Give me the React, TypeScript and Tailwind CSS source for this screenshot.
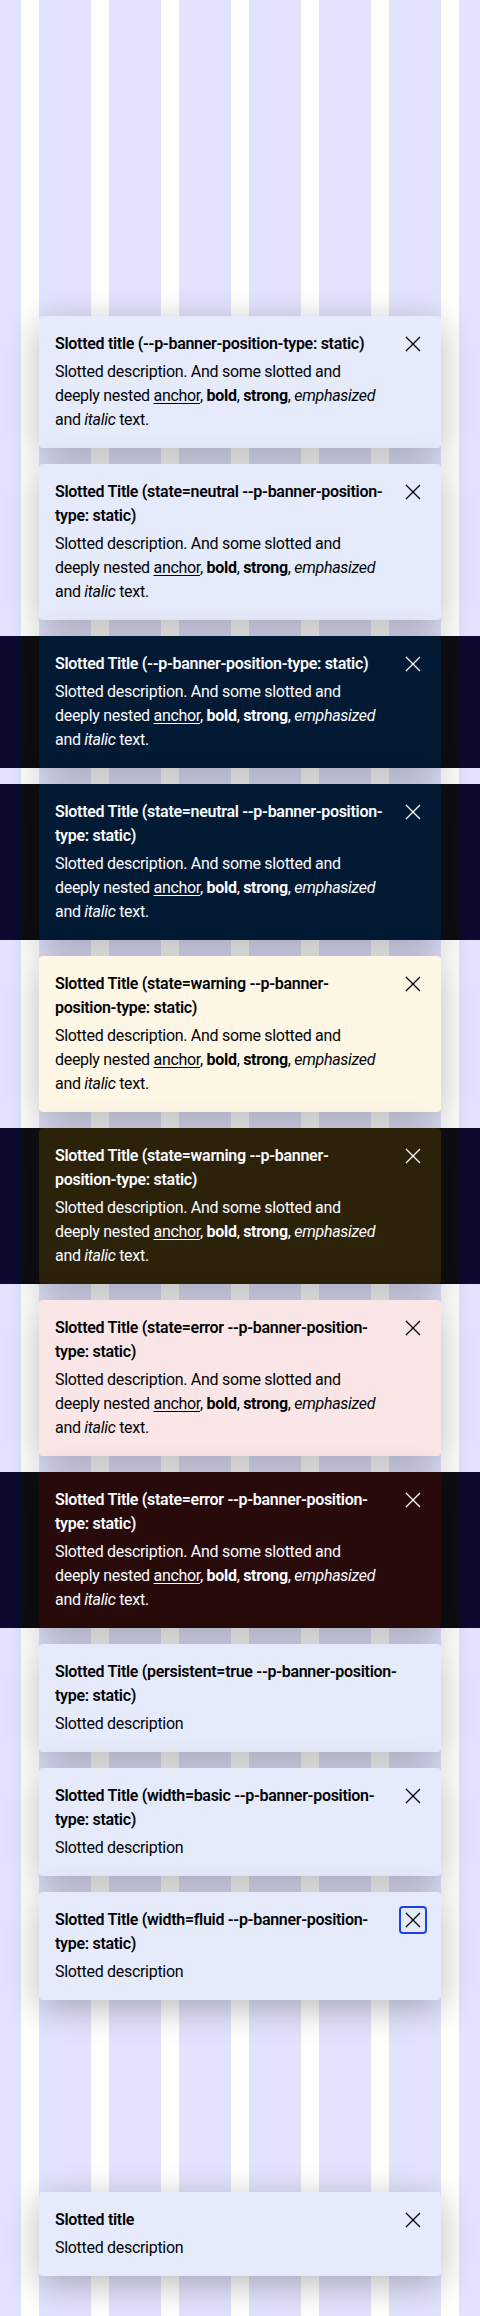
import React from 'react';

type Tone = 'info' | 'warning' | 'error';

const lightBg: Record<Tone, string> = {
  info: 'bg-[#e6ebfc]',
  warning: 'bg-[#fef7e5]',
  error: 'bg-[#fbe6e7]',
};

const darkBg: Record<Tone, string> = {
  info: 'bg-[#021a33]',
  warning: 'bg-[#2c220a]',
  error: 'bg-[#280a0b]',
};

function CloseIcon() {
  return (
    <svg width="24" height="24" viewBox="0 0 24 24" fill="none">
      <path d="M5 5L19 19M19 5L5 19" stroke="currentColor" strokeWidth="1.3" />
    </svg>
  );
}

function RichDescription() {
  return (
    <>
      Slotted description. And some slotted and
      <br />
      deeply nested <a className="underline underline-offset-2">anchor</a>, <b className="font-bold">bold</b>,{' '}
      <strong className="font-bold">strong</strong>, <em className="italic">emphasized</em>
      <br />
      and <i className="italic">italic</i> text.
    </>
  );
}

interface BannerProps {
  title: React.ReactNode;
  description: React.ReactNode;
  tone?: Tone;
  dark?: boolean;
  closable?: boolean;
  focused?: boolean;
}

function Banner({ title, description, tone = 'info', dark = false, closable = true, focused = false }: BannerProps) {
  const bg = dark ? darkBg[tone] : lightBg[tone];
  const text = dark ? 'text-[#fbfcff]' : 'text-[#010205]';

  return (
    <div
      className={`flex items-start rounded-[4px] pl-4 pr-[14px] py-4 shadow-[0_8px_36px_rgba(0,0,0,0.28)] ${bg} ${text}`}
    >
      <div className="flex flex-1 flex-col gap-1 whitespace-nowrap">
        <p className="text-base leading-6 font-semibold tracking-[-0.3px]">{title}</p>
        <p className="text-base leading-6 font-normal tracking-[-0.3px]">{description}</p>
      </div>
      {closable && (
        <button
          className={`-mt-0.5 flex h-7 w-7 shrink-0 items-center justify-center rounded-[4px] ${
            focused ? 'border-2 border-[#1a44ea]' : 'border-2 border-transparent'
          }`}
          aria-label="Close"
        >
          <CloseIcon />
        </button>
      )}
    </div>
  );
}

function DarkRow({ children }: { children: React.ReactNode }) {
  return (
    <div className="w-full bg-[linear-gradient(to_right,#0c0a2e_0px,#0c0a2e_21px,#0e0e12_21px,#0e0e12_459px,#0c0a2e_459px)]">
      <div className="mx-[39px]">{children}</div>
    </div>
  );
}

function LightRow({ children }: { children: React.ReactNode }) {
  return <div className="mx-[39px]">{children}</div>;
}

export default function App() {
  return (
    <div
      className="min-h-[2316px] w-[480px] pt-[316px] pb-10 font-['Roboto',sans-serif] bg-[linear-gradient(to_right,#e3e3fd_0px,#e3e3fd_21px,#ffffff_21px,#ffffff_39px,#e3e3fd_39px,#e3e3fd_91px,#ffffff_91px,#ffffff_109px,#e3e3fd_109px,#e3e3fd_161px,#ffffff_161px,#ffffff_179px,#e3e3fd_179px,#e3e3fd_231px,#ffffff_231px,#ffffff_249px,#e3e3fd_249px,#e3e3fd_301px,#ffffff_301px,#ffffff_319px,#e3e3fd_319px,#e3e3fd_371px,#ffffff_371px,#ffffff_389px,#e3e3fd_389px,#e3e3fd_441px,#ffffff_441px,#ffffff_459px,#e3e3fd_459px)]"
    >
      <div className="flex flex-col gap-4">
        <LightRow>
          <Banner title="Slotted title (--p-banner-position-type: static)" description={<RichDescription />} />
        </LightRow>
        <LightRow>
          <Banner
            title={
              <>
                Slotted Title (state=neutral --p-banner-position-
                <br />
                type: static)
              </>
            }
            description={<RichDescription />}
          />
        </LightRow>
        <DarkRow>
          <Banner dark title="Slotted Title (--p-banner-position-type: static)" description={<RichDescription />} />
        </DarkRow>
        <DarkRow>
          <Banner
            dark
            title={
              <>
                Slotted Title (state=neutral --p-banner-position-
                <br />
                type: static)
              </>
            }
            description={<RichDescription />}
          />
        </DarkRow>
        <LightRow>
          <Banner
            tone="warning"
            title={
              <>
                Slotted Title (state=warning --p-banner-
                <br />
                position-type: static)
              </>
            }
            description={<RichDescription />}
          />
        </LightRow>
        <DarkRow>
          <Banner
            dark
            tone="warning"
            title={
              <>
                Slotted Title (state=warning --p-banner-
                <br />
                position-type: static)
              </>
            }
            description={<RichDescription />}
          />
        </DarkRow>
        <LightRow>
          <Banner
            tone="error"
            title={
              <>
                Slotted Title (state=error --p-banner-position-
                <br />
                type: static)
              </>
            }
            description={<RichDescription />}
          />
        </LightRow>
        <DarkRow>
          <Banner
            dark
            tone="error"
            title={
              <>
                Slotted Title (state=error --p-banner-position-
                <br />
                type: static)
              </>
            }
            description={<RichDescription />}
          />
        </DarkRow>
        <LightRow>
          <Banner
            closable={false}
            title={
              <>
                Slotted Title (persistent=true --p-banner-position-
                <br />
                type: static)
              </>
            }
            description="Slotted description"
          />
        </LightRow>
        <LightRow>
          <Banner
            title={
              <>
                Slotted Title (width=basic --p-banner-position-
                <br />
                type: static)
              </>
            }
            description="Slotted description"
          />
        </LightRow>
        <LightRow>
          <Banner
            focused
            title={
              <>
                Slotted Title (width=fluid --p-banner-position-
                <br />
                type: static)
              </>
            }
            description="Slotted description"
          />
        </LightRow>
      </div>
      <div className="mx-[39px] mt-[192px]">
        <Banner title="Slotted title" description="Slotted description" />
      </div>
    </div>
  );
}
